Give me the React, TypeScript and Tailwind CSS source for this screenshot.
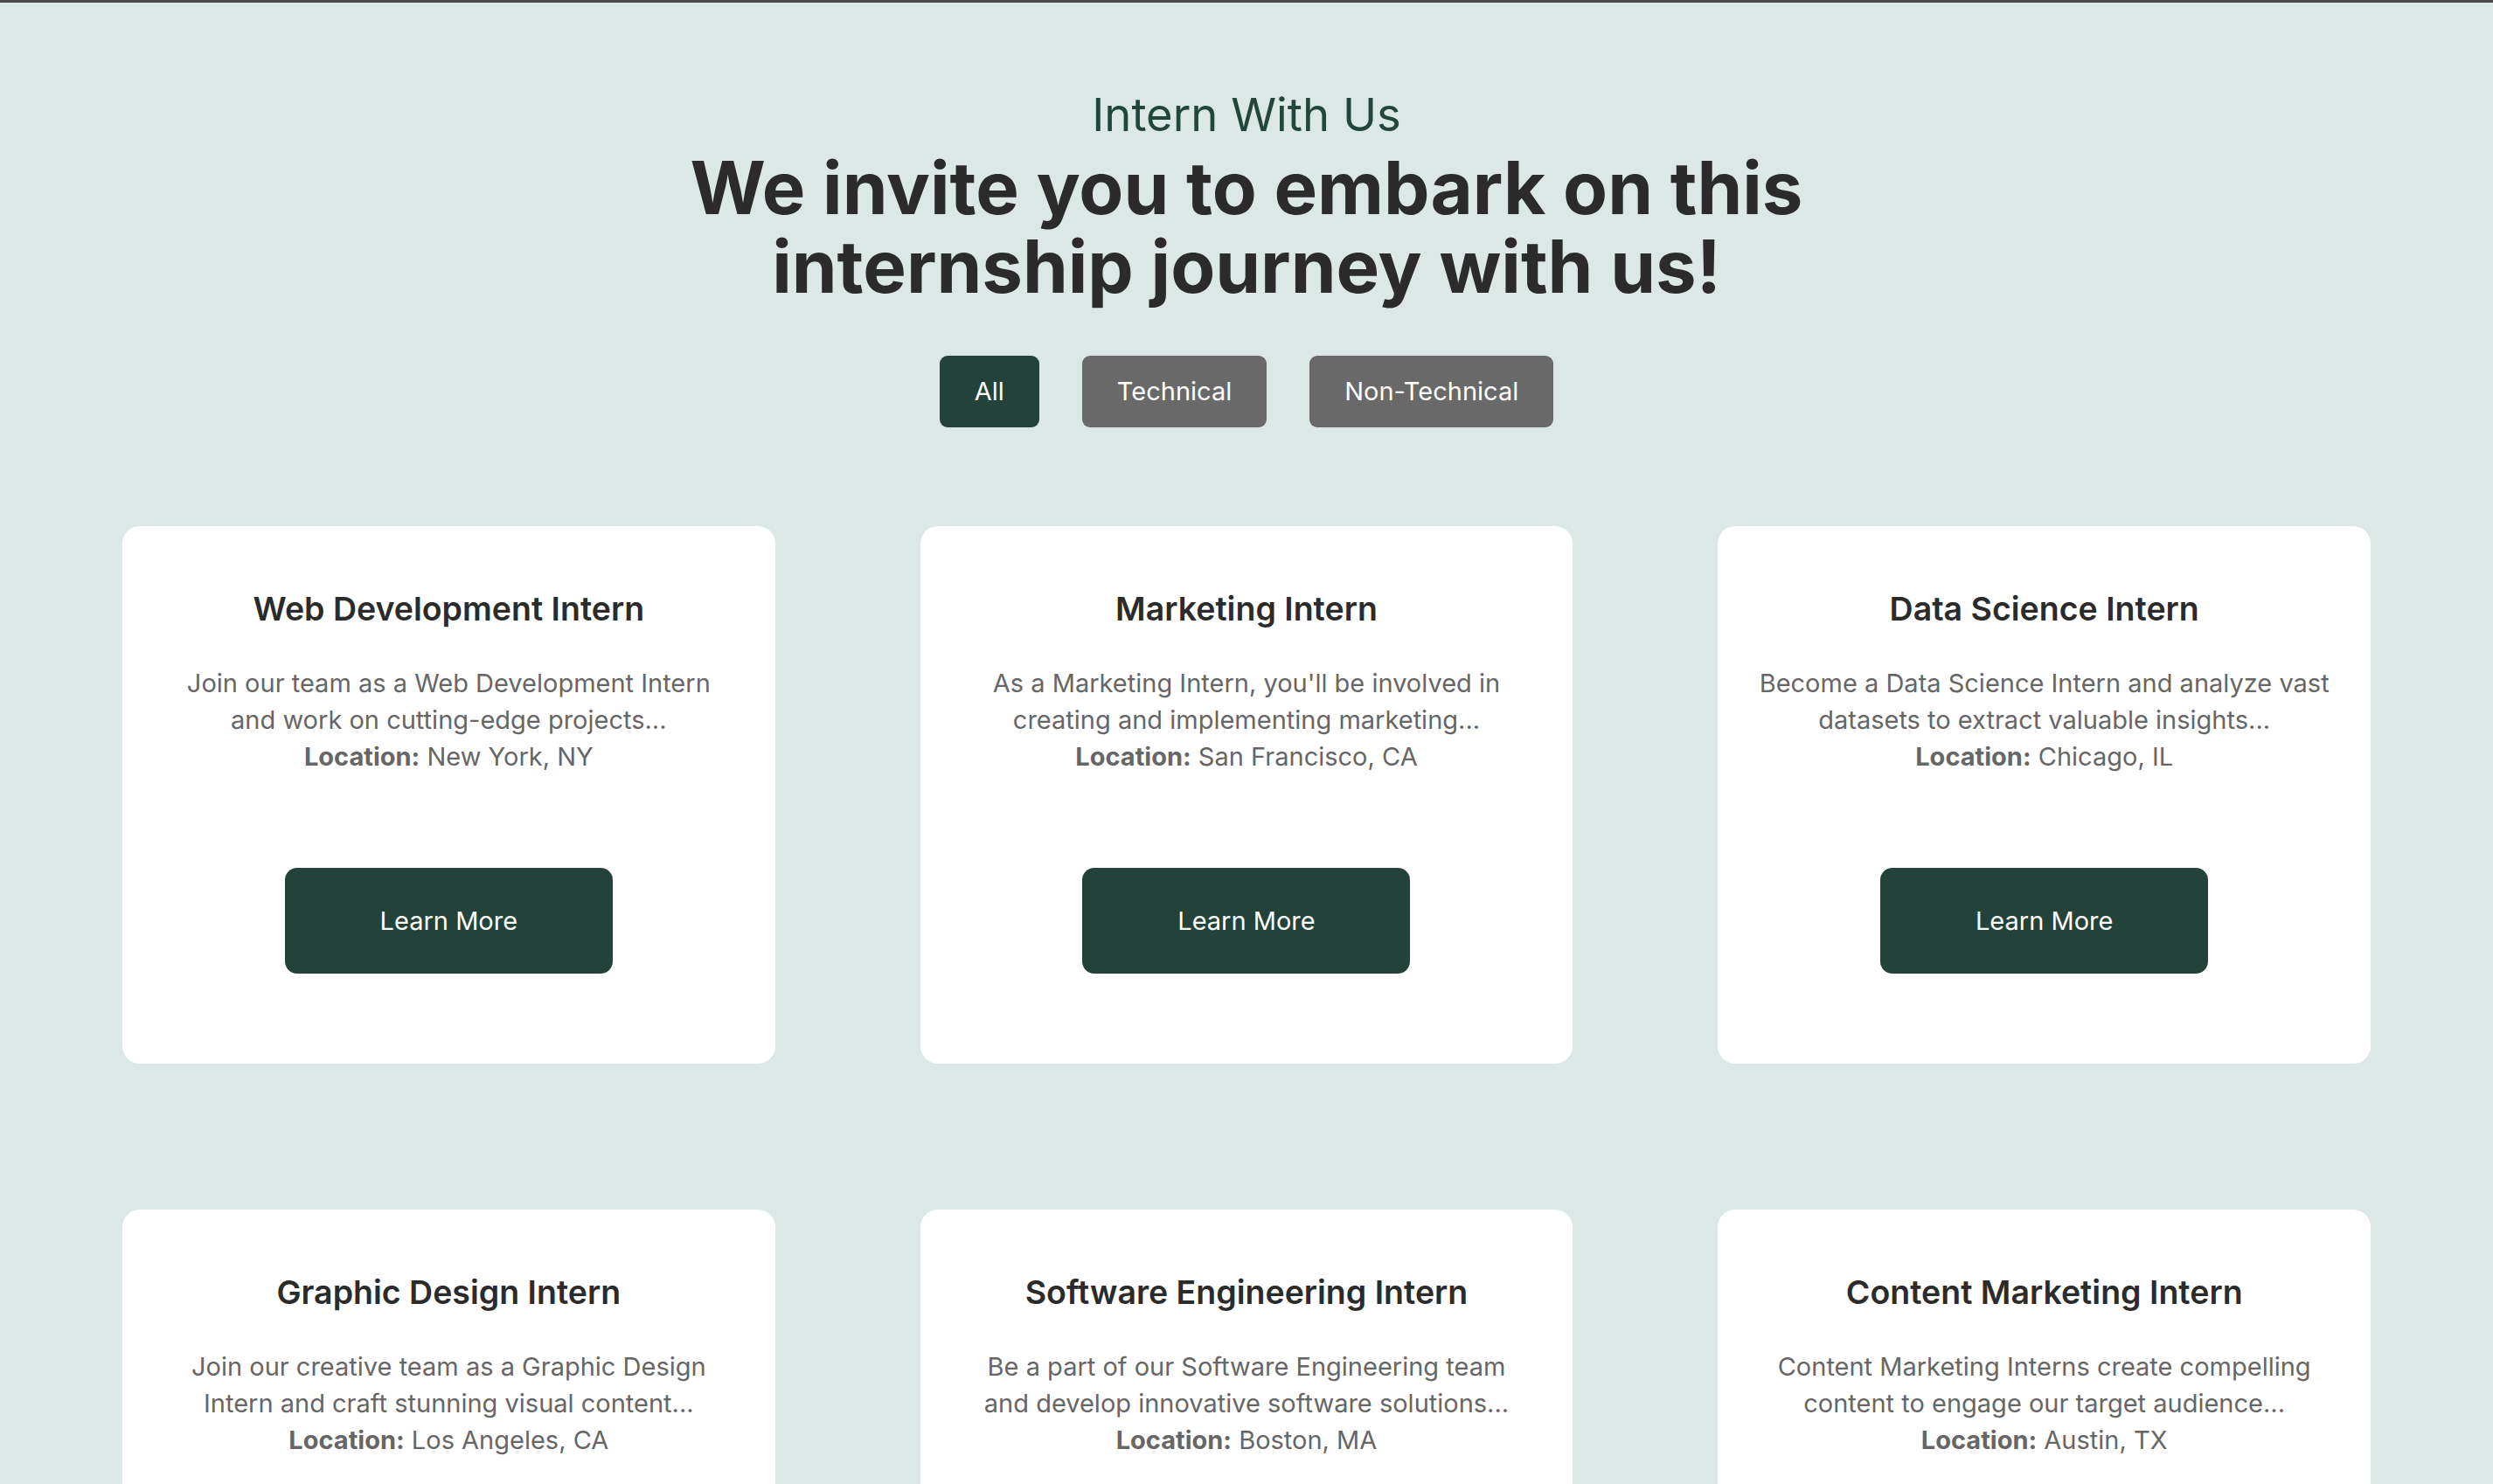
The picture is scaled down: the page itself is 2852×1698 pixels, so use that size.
const internships = [
  {
    title: "Web Development Intern",
    lines: ["Join our team as a Web Development Intern", "and work on cutting-edge projects..."],
    location: "New York, NY",
  },
  {
    title: "Marketing Intern",
    lines: ["As a Marketing Intern, you'll be involved in", "creating and implementing marketing..."],
    location: "San Francisco, CA",
  },
  {
    title: "Data Science Intern",
    lines: ["Become a Data Science Intern and analyze vast", "datasets to extract valuable insights..."],
    location: "Chicago, IL",
  },
  {
    title: "Graphic Design Intern",
    lines: ["Join our creative team as a Graphic Design", "Intern and craft stunning visual content..."],
    location: "Los Angeles, CA",
  },
  {
    title: "Software Engineering Intern",
    lines: ["Be a part of our Software Engineering team", "and develop innovative software solutions..."],
    location: "Boston, MA",
  },
  {
    title: "Content Marketing Intern",
    lines: ["Content Marketing Interns create compelling", "content to engage our target audience..."],
    location: "Austin, TX",
  },
];

function InternCard({ title, lines, location }: { title: string; lines: string[]; location: string }) {
  return (
    <div className="flex flex-col items-center rounded-[20px] bg-white px-[30px] pt-[73px] pb-[103px] text-center">
      <h3 className="text-[37.5px] leading-[44px] font-semibold text-[#2b2b2b]">{title}</h3>

      <p className="mt-[42px] text-[29px] leading-[42px] text-[#666666]">
        {lines.map((line) => (
          <span key={line} className="block whitespace-nowrap">
            {line}
          </span>
        ))}
        <span className="block">
          <span className="font-bold">Location:</span> {location}
        </span>
      </p>

      <button className="mt-[106px] flex h-[121px] w-[375px] items-center justify-center rounded-[14px] bg-[#23433a] text-[29px] text-white">
        Learn More
      </button>
    </div>
  );
}

export default function App() {
  return (
    <div className="min-h-screen border-t-[3px] border-[#4a4a4a] bg-[#dce8e5] pb-[160px] font-[family-name:Inter,sans-serif]">
      <section className="flex flex-col items-center pt-[97px] text-center">
        <p className="text-[52.6px] leading-[62px] text-[#22463a]">Intern With Us</p>

        <h1 className="mt-[8px] max-w-[1400px] text-[83.3px] leading-[90px] font-bold text-[#2b2b2b]">
          We invite you to embark on this internship journey with us!
        </h1>

        <div className="mt-[57px] flex gap-[49px]">
          <button className="flex h-[82px] items-center rounded-[9px] bg-[#23433a] px-[40px] text-[29px] text-white">
            All
          </button>
          <button className="flex h-[82px] items-center rounded-[9px] bg-[#696969] px-[40px] text-[29px] text-white">
            Technical
          </button>
          <button className="flex h-[82px] items-center rounded-[9px] bg-[#696969] px-[40px] text-[29px] text-white">
            Non-Technical
          </button>
        </div>
      </section>

      <div className="mt-[113px] grid grid-cols-3 gap-x-[166px] gap-y-[167px] px-[140px]">
        {internships.map((item) => (
          <InternCard key={item.title} {...item} />
        ))}
      </div>
    </div>
  );
}
